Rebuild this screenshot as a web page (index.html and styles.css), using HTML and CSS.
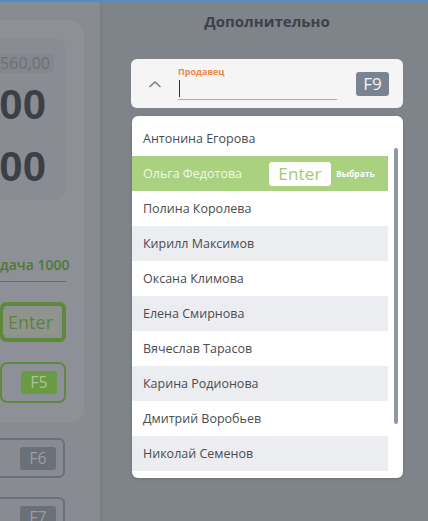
FILE: index.html
```html
<!DOCTYPE html>
<html lang="ru">
<head>
    <meta charset="UTF-8">
    <meta name="viewport" content="width=device-width, initial-scale=1.0">
    <title>Дополнительно</title>
    <link rel="stylesheet" href="styles.css">
</head>
<body>
    <div class="topline"></div>
    <div class="screen">
        <!-- Left column (dimmed) -->
        <div class="side">
            <div class="card">
                <div class="sums">
                    <div class="pill">560,00</div>
                    <div class="big">00</div>
                    <div class="big">00</div>
                </div>
                <div class="change">дача 1000</div>
                <div class="btn-enter"><span>Enter</span></div>
                <div class="btn-f5"><span>F5</span></div>
            </div>
            <div class="btn-grey"><span>F6</span></div>
            <div class="btn-grey"><span>F7</span></div>
        </div>
        <div class="divider"></div>

        <!-- Right panel -->
        <div class="panel">
            <h2 class="title">Дополнительно</h2>

            <div class="field">
                <svg class="chev" width="14" height="10" viewBox="0 0 14 10">
                    <path d="M2 7.5 L7 3 L12 7.5" fill="none" stroke="#7b7e84" stroke-width="1.6" stroke-linecap="round"/>
                </svg>
                <div class="field-body">
                    <label>Продавец</label>
                    <div class="field-input"><span class="caret"></span></div>
                </div>
                <span class="key">F9</span>
            </div>

            <div class="dropdown">
                <ul class="list">
                    <li>Антонина Егорова</li>
                    <li class="active">Ольга Федотова <span class="enter">Enter</span><b>Выбрать</b></li>
                    <li>Полина Королева</li>
                    <li class="alt">Кирилл Максимов</li>
                    <li>Оксана Климова</li>
                    <li class="alt">Елена Смирнова</li>
                    <li>Вячеслав Тарасов</li>
                    <li class="alt">Карина Родионова</li>
                    <li>Дмитрий Воробьев</li>
                    <li class="alt">Николай Семенов</li>
                </ul>
                <div class="scroll"><div class="thumb"></div></div>
            </div>
        </div>
    </div>
</body>
</html>
```

FILE: styles.css
```css
body {
    margin: 0;
    padding: 0;
    width: 428px;
    height: 521px;
    overflow: hidden;
    background-color: #888b91;
    font-family: "Open Sans", Arial, sans-serif;
}

.topline {
    height: 2px;
    background-color: #4d8fcb;
}

.screen {
    display: flex;
    height: 519px;
}

/* left dimmed column */
.side {
    width: 100px;
    flex-shrink: 0;
    overflow: hidden;
    background-color: #888b91;
}

.card {
    margin: 18px 16px 0 -30px;
    padding: 18px 18px 20px 30px;
    height: 365px;
    background-color: #8d9096;
    border-radius: 14px;
}

.sums {
    margin-left: -30px;
    padding: 14px 12px 0 0;
    height: 148px;
    background-color: #898c92;
    border-radius: 12px;
    text-align: right;
    white-space: nowrap;
}

.pill {
    display: inline-block;
    padding: 0 4px 0 4px;
    height: 19px;
    line-height: 19px;
    font-size: 16px;
    color: #6d7076;
    background-color: #84878d;
    border-radius: 3px;
}

.big {
    font-family: "Liberation Sans", Arial, sans-serif;
    font-weight: bold;
    font-size: 42px;
    line-height: 62px;
    color: #3c3f45;
    margin-right: 8px;
}

.change {
    margin-top: 55px;
    text-align: right;
    font-size: 14px;
    font-weight: 600;
    color: #4f7a31;
    padding-bottom: 7px;
    border-bottom: 1px solid #a2573c;
    white-space: nowrap;
}

.btn-enter {
    margin-top: 20px;
    height: 32px;
    border: 4px solid #5c8a38;
    border-radius: 6px;
    display: flex;
    justify-content: flex-end;
    align-items: center;
    padding-right: 4px;
}

.btn-enter span {
    padding: 0 5px;
    height: 25px;
    line-height: 25px;
    font-size: 18px;
    color: #5f7f4a;
    background-color: #8f958b;
}

.btn-f5 {
    margin-top: 20px;
    height: 37px;
    border: 2px solid #5e8a3b;
    border-radius: 7px;
    display: flex;
    justify-content: flex-end;
    align-items: center;
    padding-right: 7px;
}

.btn-f5 span,
.btn-grey span {
    width: 36px;
    height: 23px;
    line-height: 23px;
    text-align: center;
    font-size: 16px;
    border-radius: 3px;
}

.btn-f5 span {
    background-color: #6a9a45;
    color: #a9c694;
}

.btn-grey {
    margin: 15px 35px 0 -20px;
    height: 36px;
    border: 2px solid #6b6f77;
    border-radius: 6px;
    display: flex;
    justify-content: flex-end;
    align-items: center;
    padding-right: 7px;
}

.btn-grey + .btn-grey {
    margin-top: 19px;
}

.btn-grey span {
    background-color: #6b6f77;
    color: #9a9da3;
}

.divider {
    width: 3px;
    flex-shrink: 0;
    background-color: #7b7e85;
}

/* right panel */
.panel {
    flex: 1;
    background-color: #7f838a;
    padding: 0 25px 0 28px;
}

.title {
    margin: 9px 0 0;
    text-align: center;
    font-size: 15px;
    font-weight: bold;
    color: #3e4147;
    line-height: 20px;
}

.field {
    margin-top: 28px;
    height: 49px;
    background-color: #f5f5f5;
    border-radius: 6px;
    display: flex;
    align-items: center;
    padding: 0 14px 0 17px;
}

.chev {
    flex-shrink: 0;
}

.field-body {
    margin-left: 16px;
    width: 159px;
    align-self: flex-start;
    padding-top: 7px;
}

.field-body label {
    display: block;
    font-size: 9px;
    font-weight: bold;
    color: #ec8a4a;
    line-height: 12px;
}

.field-input {
    height: 21px;
    border-bottom: 1px solid #ee9a62;
    display: flex;
    align-items: center;
}

.caret {
    margin-left: 1px;
    width: 1px;
    height: 17px;
    background-color: #333;
}

.key {
    margin-left: auto;
    width: 33px;
    height: 24px;
    line-height: 24px;
    text-align: center;
    font-size: 17px;
    color: #f2f4f6;
    background-color: #7a8390;
    border-radius: 3px;
}

.dropdown {
    margin: 8px 0 0 1px;
    height: 362px;
    background-color: #fff;
    border-radius: 6px;
    display: flex;
    box-shadow: 0 1px 3px rgba(0, 0, 0, 0.15);
}

.list {
    list-style: none;
    margin: 0;
    padding: 5px 0 0;
    width: 256px;
}

.list li {
    height: 35px;
    display: flex;
    align-items: center;
    padding-left: 11px;
    font-size: 12.5px;
    color: #4a4c50;
}

.list li.alt {
    background-color: #ecedf0;
}

.list li.active {
    background-color: #a9d17f;
    color: #f1f7ea;
}

.enter {
    margin-left: 27px;
    width: 62px;
    height: 24px;
    line-height: 24px;
    text-align: center;
    background-color: #fff;
    color: #9fc97a;
    font-size: 17px;
    letter-spacing: 0.2px;
    border-radius: 3px;
}

.list li b {
    margin-left: 5px;
    font-size: 8.5px;
    color: #fff;
}

.scroll {
    margin-left: 6px;
    padding-top: 32px;
}

.thumb {
    width: 4px;
    height: 276px;
    background-color: #8f97a4;
    border-radius: 2px;
}
```
